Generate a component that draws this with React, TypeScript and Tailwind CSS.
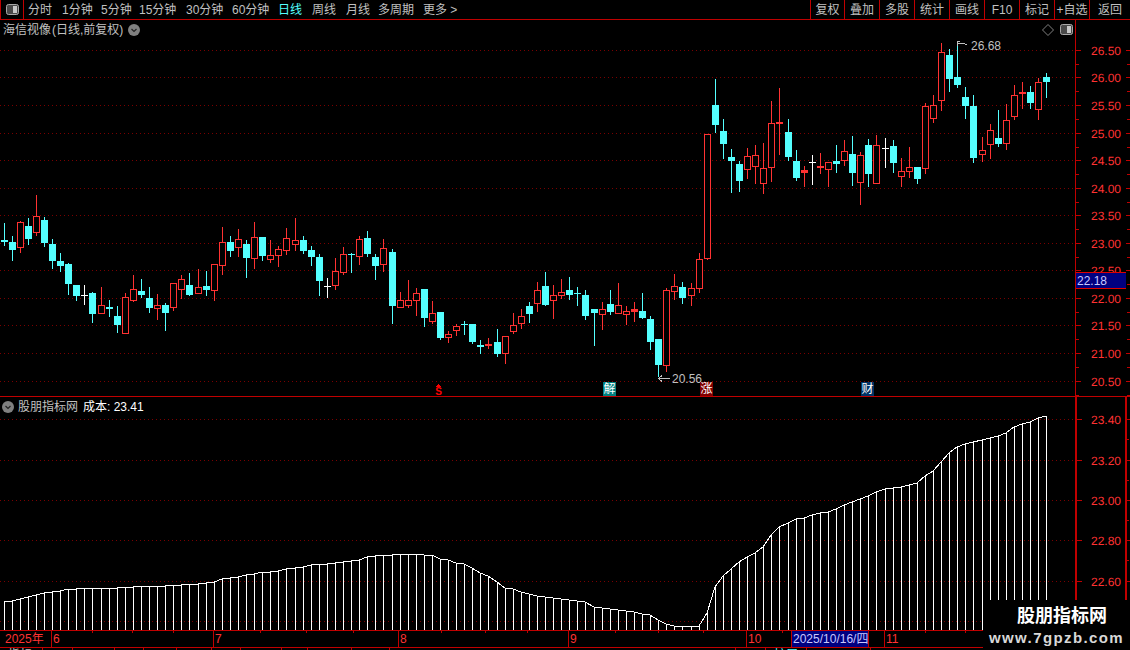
const RED = '#ff3232'
const LINE = '#c00000'

type Kind = 'c' | 'r' | 'w'
type Row = [Kind, number, number, number, number]

// columns are 8px apart with a spare pixel now and then
const spare = [12, 24, 36, 48, 61, 73, 85, 97, 109, 121]
const colX = (n: number) => 4 + 8 * n + spare.filter((s) => n >= s).length

// [kind, wick top, wick bottom, body top, body bottom], read at 3x and offset per block
const block = (base: number, rows: Row[]): Row[] =>
  rows.map(([k, a, b, c, d]) => [k, Math.round(base + a / 3), Math.round(base + b / 3), Math.round(base + c / 3), Math.round(base + d / 3)])

const candles: Row[] = [
  ...block(190, [
    ['c', 99, 168, 150, 156], ['c', 138, 212, 156, 180], ['r', 93, 188, 97, 173], ['c', 84, 165, 108, 147],
    ['r', 15, 138, 78, 128], ['c', 81, 171, 90, 159], ['c', 147, 237, 162, 213], ['c', 189, 246, 213, 228],
    ['c', 219, 315, 222, 282], ['c', 285, 333, 285, 318], ['w', 285, 345, 315, 318], ['c', 306, 399, 309, 372],
    ['r', 291, 372, 346, 371], ['c', 330, 381, 351, 357], ['c', 348, 429, 378, 405], ['r', 309, 432, 322, 431],
    ['r', 255, 336, 298, 332], ['c', 267, 324, 303, 315], ['c', 291, 369, 324, 354], ['r', 312, 390, 346, 356],
    ['c', 339, 423, 345, 369], ['r', 279, 363, 280, 353], ['r', 255, 326, 268, 299], ['c', 249, 318, 285, 315],
    ['r', 237, 312, 292, 311], ['c', 243, 318, 288, 300], ['r', 222, 333, 223, 302], ['r', 111, 255, 157, 227],
    ['c', 138, 201, 156, 183], ['r', 117, 201, 148, 173], ['c', 150, 264, 162, 204], ['r', 96, 237, 142, 206],
    ['c', 141, 213, 141, 198], ['r', 150, 219, 196, 209], ['r', 168, 231, 178, 197], ['r', 114, 195, 145, 182],
    ['r', 84, 183, 151, 164], ['c', 138, 192, 150, 183], ['c', 168, 228, 180, 201], ['c', 192, 318, 201, 273],
    ['w', 264, 324, 288, 291], ['r', 204, 300, 244, 287], ['r', 171, 255, 193, 250],
  ]),
  ...block(230, [
    ['c', 70, 129, 71, 74], ['r', 18, 105, 28, 82], ['c', 3, 80, 24, 72], ['c', 72, 150, 81, 108],
    ['r', 27, 126, 55, 105], ['c', 57, 282, 66, 228], ['r', 186, 234, 210, 234], ['r', 150, 234, 211, 227],
    ['r', 174, 258, 190, 212], ['c', 177, 291, 177, 264], ['r', 213, 282, 249, 276], ['c', 246, 330, 246, 324],
    ['r', 303, 339, 313, 324], ['r', 282, 318, 288, 302], ['c', 273, 315, 281, 284], ['c', 282, 342, 282, 336],
    ['c', 330, 372, 345, 351], ['r', 324, 357, 342, 348], ['c', 297, 381, 336, 372], ['r', 318, 402, 319, 371],
    ['r', 249, 312, 286, 306], ['r', 237, 297, 258, 282], ['c', 216, 279, 228, 252], ['r', 156, 246, 181, 222],
    ['c', 126, 228, 168, 225], ['r', 165, 267, 196, 213], ['r', 147, 207, 187, 198], ['c', 141, 210, 180, 195],
    ['c', 171, 228, 188, 191], ['c', 180, 270, 195, 258], ['c', 237, 348, 237, 249], ['r', 216, 300, 238, 255],
    ['c', 180, 255, 222, 246], ['r', 159, 252, 226, 252], ['r', 228, 285, 244, 255], ['r', 216, 276, 238, 246],
    ['c', 189, 267, 243, 264], ['c', 258, 360, 267, 336], ['c', 327, 440, 327, 405], ['r', 175, 426, 181, 408],
    ['r', 132, 210, 169, 185], ['c', 156, 222, 171, 204], ['r', 159, 228, 175, 198], ['r', 70, 190, 88, 177],
  ]),
  ...block(70, [
    ['r', 193, 570, 193, 567], ['c', 27, 189, 105, 165], ['c', 147, 267, 183, 222], ['c', 237, 369, 261, 273],
    ['c', 273, 366, 282, 333], ['r', 234, 327, 259, 299], ['r', 225, 342, 256, 290], ['r', 219, 372, 295, 341],
    ['r', 93, 336, 160, 293], ['r', 54, 255, 155, 161], ['c', 147, 273, 186, 261], ['c', 240, 333, 273, 324],
    ['r', 288, 351, 301, 308], ['w', 255, 345, 276, 279], ['r', 249, 312, 287, 293], ['r', 277, 351, 277, 299],
    ['c', 225, 309, 273, 282], ['r', 210, 288, 244, 272], ['c', 198, 348, 252, 309], ['r', 246, 405, 256, 338],
    ['c', 207, 351, 225, 312], ['r', 195, 342, 226, 341], ['w', 204, 294, 234, 237], ['c', 210, 309, 228, 279],
    ['r', 264, 351, 304, 320], ['r', 231, 324, 292, 305], ['c', 291, 342, 291, 327], ['r', 99, 312, 109, 296],
    ['r', 75, 159, 106, 146],
  ]),
  ...block(0, [
    ['r', 129, 333, 157, 304], ['c', 147, 276, 165, 237], ['c', 123, 264, 231, 255], ['c', 261, 357, 291, 318],
  ]),
  ...block(70, [
    ['c', 75, 279, 108, 264], ['r', 201, 276, 241, 254], ['r', 162, 267, 181, 224], ['c', 120, 231, 204, 222],
    ['r', 102, 240, 151, 221], ['r', 45, 150, 76, 140], ['r', 36, 117, 66, 72], ['c', 48, 117, 66, 99],
    ['r', 24, 150, 37, 119], ['c', 9, 84, 21, 36],
  ]),
]

const costLine = [
  602, 601, 599, 597, 595, 593, 592, 591, 589, 589, 588, 588, 588, 588, 588, 587, 587, 586, 586, 586, 586, 585,
  585, 584, 584, 583, 582, 579, 578, 577, 575, 574, 572, 572, 571, 569, 568, 567, 565, 564, 564, 563, 562, 561,
  560, 557, 556, 555, 555, 554, 554, 554, 555, 555, 559, 560, 563, 564, 568, 573, 576, 582, 588, 589, 592, 594,
  596, 597, 598, 599, 600, 601, 602, 607, 608, 609, 610, 611, 612, 614, 615, 620, 624, 626, 626, 626, 626, 613,
  587, 576, 569, 562, 557, 553, 547, 535, 527, 523, 519, 518, 515, 513, 512, 509, 505, 502, 499, 496, 492, 489,
  488, 487, 485, 483, 476, 471, 462, 453, 447, 444, 442, 440, 438, 436, 433, 427, 424, 422, 418, 416,
]

const mainGrid = [50, 77, 105, 133, 160, 188, 215, 243, 270, 298, 325, 353, 381]
const mainLabels = ['26.50', '26.00', '25.50', '25.00', '24.50', '24.00', '23.50', '23.00', '22.50', '22.00', '21.50', '21.00', '20.50']
const subGrid = [419, 460, 500, 540, 581, 621]
const subLabels = ['23.40', '23.20', '23.00', '22.80', '22.60']

const tabs = [
  { label: '分时', w: 'w-[34px]' },
  { label: '1分钟', w: 'w-[39px]' },
  { label: '5分钟', w: 'w-[38px]' },
  { label: '15分钟', w: 'w-[47px]' },
  { label: '30分钟', w: 'w-[46px]' },
  { label: '60分钟', w: 'w-[46px]' },
  { label: '日线', w: 'w-[34px]', active: true },
  { label: '周线', w: 'w-[34px]' },
  { label: '月线', w: 'w-[32px]' },
  { label: '多周期', w: 'w-[45px]' },
  { label: '更多 >', w: 'w-[40px]' },
]

const actions = [
  { label: '复权', w: 'w-[34px]' },
  { label: '叠加', w: 'w-[35px]' },
  { label: '多股', w: 'w-[35px]' },
  { label: '统计', w: 'w-[35px]' },
  { label: '画线', w: 'w-[35px]' },
  { label: 'F10', w: 'w-[35px]' },
  { label: '标记', w: 'w-[35px]' },
  { label: '+自选', w: 'w-[35px]' },
  { label: '返回', w: 'w-[41px]' },
]

const dateTicks = [92, 132, 173, 260, 306, 353, 441, 485, 527, 615, 658, 703, 782, 925, 965]

function Candle({ row, n }: { row: Row; n: number }) {
  const [kind, hi, lo, top, bot] = row
  const x = colX(n)
  const color = kind === 'c' ? '#54ffff' : kind === 'r' ? RED : '#ffffff'
  const h = Math.max(bot - top, 1)
  return (
    <g>
      <rect x={x} y={hi} width={1} height={lo - hi} fill={color} />
      {kind === 'r' && h > 3 ? (
        <rect x={x - 2.5} y={top + 0.5} width={6} height={h - 1} fill="#000" stroke={color} />
      ) : (
        <rect x={x - 3} y={top} width={7} height={h} fill={color} />
      )}
    </g>
  )
}

function Dots({ y }: { y: number }) {
  return <line x1={0} x2={1075} y1={y + 0.5} y2={y + 0.5} stroke="#7a0000" strokeDasharray="1 3" />
}

function Toggle() {
  return (
    <svg width="13" height="11" viewBox="0 0 13 11">
      <rect x="0.5" y="0.5" width="12" height="10" rx="2" fill="#4a4a4a" stroke="#a8a8a8" />
      <rect x="7" y="2" width="4" height="7" fill="#c8c8c8" />
    </svg>
  )
}

function Chevron() {
  return (
    <svg width="12" height="12" viewBox="0 0 12 12">
      <circle cx="6" cy="6" r="6" fill="#808080" />
      <path d="M3.5 5 L6 7.5 L8.5 5" fill="none" stroke="#222" strokeWidth="1.2" />
    </svg>
  )
}

export default function App() {
  return (
    <div className="relative w-[1130px] h-[650px] overflow-hidden bg-black flex flex-col text-xs text-[#c0c0c0] [font-family:'Liberation_Sans','Noto_Sans_CJK_SC',sans-serif]">
      {/* Top toolbar */}
      <div className="flex items-stretch h-5 shrink-0 border-b border-[#c00000]">
        <div className="flex items-center justify-center w-6 border-x border-[#c00000]">
          <Toggle />
        </div>
        <div className="flex items-center pl-1">
          {tabs.map((t) => (
            <span key={t.label} className={`${t.w} whitespace-nowrap ${t.active ? 'text-[#54ffff]' : ''}`}>
              {t.label}
            </span>
          ))}
        </div>
        <div className="flex ml-auto">
          {actions.map((a) => (
            <span key={a.label} className={`${a.w} flex items-center justify-center border-l border-[#c00000] whitespace-nowrap`}>
              {a.label}
            </span>
          ))}
        </div>
      </div>

      {/* Candlestick panel */}
      <div className="relative h-[377px] shrink-0 border-b border-[#c00000]">
        <svg className="block" width="1130" height="376" viewBox="0 20 1130 376" shapeRendering="crispEdges">
          {mainGrid.map((y) => (
            <Dots key={y} y={y} />
          ))}
          <rect x={1075} y={20} width={1} height={376} fill={LINE} />
          {mainGrid.map((y) => (
            <g key={y}>
              <rect x={1076} y={y} width={5} height={1} fill={LINE} />
              <rect x={1076} y={y + 14} width={3} height={1} fill={LINE} />
              <rect x={1126} y={y} width={4} height={1} fill={LINE} />
              <rect x={1127} y={y + 14} width={3} height={1} fill={LINE} />
            </g>
          ))}
          {candles.map((row, n) => (
            <Candle key={n} row={row} n={n} />
          ))}
          {mainLabels.map((label, i) => (
            <text key={label} x={1091} y={mainGrid[i] + 5} fontSize="12" fill={RED} textRendering="geometricPrecision">
              {label}
            </text>
          ))}
          {/* high and low flags */}
          <path d="M957.5 41 V46 M957.5 41.5 H960 M957.5 43.5 H960 L963 43 L967 45" fill="none" stroke="#c0c0c0" />
          <text x={971} y={50} fontSize="12" fill="#c0c0c0">26.68</text>
          <path d="M658.5 378.5 H670 M658.5 378.5 L662 375.5 M658.5 378.5 L662 381.5" fill="none" stroke="#c0c0c0" />
          <text x={672} y={383} fontSize="12" fill="#c0c0c0">20.56</text>
          {/* event marker */}
          <path d="M438.5 384 L441.5 387 H435.5 Z" fill="#ff0000" />
          <text x={438.5} y={395} fontSize="10" fontWeight="bold" textAnchor="middle" fill="#ff0000">S</text>
        </svg>

        <div className="absolute left-[3px] top-[2px] flex items-center">
          <span>海信视像</span>
          <span className="ml-[1px]">(日线,前复权)</span>
          <span className="ml-[5px] flex">
            <Chevron />
          </span>
        </div>
        <svg className="absolute left-[1042px] top-[4px]" width="12" height="12" viewBox="0 0 12 12">
          <path d="M6 0.5 L11.5 6 L6 11.5 L0.5 6 Z" fill="none" stroke="#808080" />
        </svg>
        <div className="absolute left-[1060px] top-[4px] flex">
          <Toggle />
        </div>

        <div className="absolute left-[1076px] top-[252px] w-[50px] h-[17px] flex items-center pl-[1px] bg-[#000080] border-y border-[#e00000] text-[#c8c8ff]">
          22.18
        </div>

        <span className="absolute left-[603px] top-[362px] w-[13px] h-[14px] flex items-center justify-center bg-[#008080] text-white">解</span>
        <span className="absolute left-[700px] top-[362px] w-[13px] h-[14px] flex items-center justify-center bg-[#800000] text-white">涨</span>
        <span className="absolute left-[861px] top-[362px] w-[13px] h-[14px] flex items-center justify-center bg-[#003366] text-white">财</span>
      </div>

      {/* Indicator panel */}
      <div className="relative h-[233px] shrink-0">
        <svg className="block" width="1130" height="233" viewBox="0 397 1130 233" shapeRendering="crispEdges">
          {subGrid.map((y) => (
            <Dots key={y} y={y} />
          ))}
          <rect x={1075} y={397} width={2} height={233} fill={LINE} />
          <rect x={1125} y={397} width={2} height={233} fill={LINE} />
          {subGrid.map((y) => (
            <g key={y}>
              <rect x={1077} y={y} width={5} height={1} fill={LINE} />
              <rect x={1127} y={y} width={3} height={1} fill={LINE} />
              <rect x={1127} y={y + 20} width={2} height={1} fill={LINE} />
            </g>
          ))}
          {costLine.map((y, n) => (
            <rect key={n} x={colX(n)} y={y} width={1} height={630 - y} fill="#ffffff" />
          ))}
          <polyline points={costLine.map((y, n) => `${colX(n)},${y}`).join(' ')} fill="none" stroke="#ffffff" />
          {subLabels.map((label, i) => (
            <text key={label} x={1091} y={subGrid[i] + 5} fontSize="12" fill={RED} textRendering="geometricPrecision">
              {label}
            </text>
          ))}
        </svg>
        <div className="absolute left-[2px] top-[2px] flex items-center">
          <Chevron />
          <span className="ml-1">股朋指标网</span>
          <span className="ml-[5px] text-white">成本: 23.41</span>
        </div>
      </div>

      {/* Date axis */}
      <div className="relative flex h-4 shrink-0 border-y border-[#c00000] text-[#ff3232] box-content">
        <span className="w-[51px] pl-[5px]">2025年</span>
        <span className="w-[162px] pl-[1px] border-l border-[#c00000]">6</span>
        <span className="w-[185px] pl-[1px] border-l border-[#c00000]">7</span>
        <span className="w-[170px] pl-[1px] border-l border-[#c00000]">8</span>
        <span className="w-[178px] pl-[1px] border-l border-[#c00000]">9</span>
        <span className="w-[45px] pl-[1px] border-l border-[#c00000]">10</span>
        <span className="w-[78px] pl-[1px] border-x border-[#c00000] bg-[#000080] text-[#c8c8ff] whitespace-nowrap">2025/10/16/四</span>
        <span className="w-[15px]" />
        <span className="pl-[1px] border-l border-[#c00000]">11</span>
        {dateTicks.map((x) => (
          <svg key={x} className="absolute top-0" style={{ left: x }} width="1" height="2">
            <rect width="1" height="2" fill={LINE} />
          </svg>
        ))}
      </div>

      {/* Bottom tabs, almost cut off by the window */}
      <div className="flex h-[3px] overflow-hidden text-[#c0c0c0] leading-[14px]">
        {[43, 30, 42, 29, 33, 35, 29, 41, 26, 44, 38, 346, 30, 41, 64].map((w, i) => (
          <span key={i} className="border-r border-[#c00000] pl-2 shrink-0 whitespace-nowrap" style={{ width: w }}>
            {i === 0 ? '指标' : i === 13 ? <span className="text-[#54ffff]">扩展</span> : ''}
          </span>
        ))}
      </div>

      {/* Site watermark */}
      <div className="absolute right-0 bottom-0 w-[147px] h-[50px] bg-black flex flex-col items-center pt-[4px]">
        <span className="ml-[11px] text-[18px] leading-[24px] font-bold text-white">股朋指标网</span>
        <span className="text-[15px] leading-[18px] mt-[1px] font-bold tracking-[1.4px] text-[#d8d8d8]">www.7gpzb.com</span>
      </div>
    </div>
  )
}
